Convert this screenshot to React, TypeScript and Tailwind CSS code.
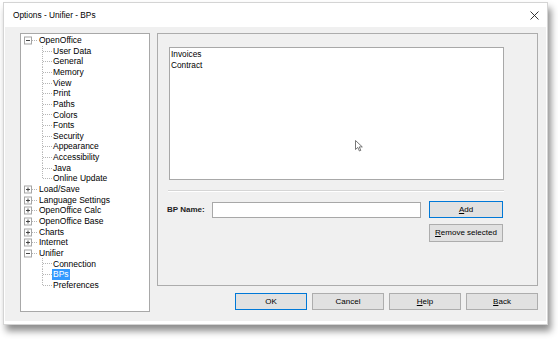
import React from "react";

type Node = { label: string; open?: boolean; children?: string[] };

const tree: Node[] = [
  {
    label: "OpenOffice",
    open: true,
    children: [
      "User Data",
      "General",
      "Memory",
      "View",
      "Print",
      "Paths",
      "Colors",
      "Fonts",
      "Security",
      "Appearance",
      "Accessibility",
      "Java",
      "Online Update",
    ],
  },
  { label: "Load/Save" },
  { label: "Language Settings" },
  { label: "OpenOffice Calc" },
  { label: "OpenOffice Base" },
  { label: "Charts" },
  { label: "Internet" },
  { label: "Unifier", open: true, children: ["Connection", "BPs", "Preferences"] },
];

const SELECTED = "BPs";
const ROW = 10.65;

function Expander({ open }: { open?: boolean }) {
  return (
    <svg width="18" height={ROW} viewBox={`0 0 18 ${ROW}`} className="shrink-0">
      <rect x="3.5" y="2" width="7" height="7" fill="#fff" stroke="#a5a5a5" />
      <line x1="5" y1="5.5" x2="9" y2="5.5" stroke="#444" />
      {!open && <line x1="7" y1="3.5" x2="7" y2="7.5" stroke="#444" />}
      <line x1="11" y1="5.5" x2="17" y2="5.5" stroke="#b4b4b4" strokeDasharray="1 1" />
    </svg>
  );
}

function Branch({ last }: { last: boolean }) {
  return (
    <svg width="32" height={ROW} viewBox={`0 0 32 ${ROW}`} className="shrink-0">
      <line x1="21.5" y1="0" x2="21.5" y2={last ? 5.5 : ROW} stroke="#b4b4b4" strokeDasharray="1 1" />
      <line x1="22" y1="5.5" x2="31" y2="5.5" stroke="#b4b4b4" strokeDasharray="1 1" />
    </svg>
  );
}

function Button({ label, u, def, w = "w-[72px]" }: { label: string; u?: number; def?: boolean; w?: string }) {
  const chars = label.split("");
  return (
    <button
      className={`${w} h-[17px] flex items-center justify-center bg-[#e1e1e1] text-[8px] text-black leading-none border ${
        def ? "border-[#0078d7]" : "border-[#adadad]"
      }`}
    >
      {chars.map((c, i) => (
        <span key={i} className={i === u ? "underline underline-offset-1" : ""}>
          {c === " " ? "\u00a0" : c}
        </span>
      ))}
    </button>
  );
}

export default function App() {
  return (
    <div
      className="w-[558px] h-[341px] bg-white pl-[3px] pt-[2px] overflow-hidden"
      style={{ fontFamily: '"Liberation Sans", Arial, sans-serif' }}
    >
      <div className="w-[545px] h-[323px] bg-white border border-[#d4d4d4] flex flex-col shadow-[3px_6px_7px_rgba(0,0,0,0.45)]">
        {/* title bar */}
        <div className="h-[24px] shrink-0 flex items-center justify-between pl-[9px] pr-[8px]">
          <span className="text-[8.3px] text-black">Options - Unifier - BPs</span>
          <svg width="9" height="9" viewBox="0 0 9 9">
            <path d="M0.5 0.5 L8.5 8.5 M8.5 0.5 L0.5 8.5" stroke="#222" strokeWidth="0.9" />
          </svg>
        </div>

        {/* body */}
        <div className="flex-1 mx-[1px] mb-[3px] bg-[#f0f0f0] flex pl-[15px] pr-[7px] pt-[6px]">
          {/* tree */}
          <div className="w-[130px] shrink-0 h-[279px] bg-white border border-[#a8a8a8] pt-[1px] text-[8.5px] text-black leading-none">
            {tree.map((n) => (
              <React.Fragment key={n.label}>
                <div className="flex items-center h-[10.65px]">
                  <Expander open={n.open} />
                  <span>{n.label}</span>
                </div>
                {n.open &&
                  n.children?.map((c, i) => (
                    <div key={c} className="flex items-center h-[10.65px]">
                      <Branch last={i === (n.children?.length ?? 0) - 1} />
                      {c === SELECTED ? (
                        <span className="-ml-[1px] px-[1px] py-[1px] bg-[#3399ff] text-white">{c}</span>
                      ) : (
                        <span>{c}</span>
                      )}
                    </div>
                  ))}
              </React.Fragment>
            ))}
          </div>

          {/* right side */}
          <div className="ml-[7px] w-[381px] shrink-0 flex flex-col">
            <div className="h-[253px] border border-[#acacac] flex flex-col pl-[11px] pt-[13px]">
              <div className="relative w-[335px] h-[133px] bg-white border border-[#a8a8a8] pt-[1px] pl-[1px] text-[8.3px] text-black leading-[10.6px]">
                <div>Invoices</div>
                <div>Contract</div>
                <svg
                  className="absolute left-[185px] top-[92px]"
                  width="8"
                  height="12"
                  viewBox="0 0 8 12"
                >
                  <path d="M0.5 0.5 L0.5 9.5 L2.8 7.4 L4.4 11 L5.8 10.4 L4.3 6.9 L7.3 6.9 Z" fill="#fff" stroke="#555" strokeWidth="0.8" />
                </svg>
              </div>
              <div className="mt-[10px] -ml-[1px] w-[336px] h-[2px] border-t border-[#d5d5d5] border-b border-b-white" />
              <div className="mt-[9px] -ml-[2px] grid grid-cols-[37px_209px_74px] gap-x-[8px] gap-y-[6px] items-center">
                <span className="text-[8px] font-bold text-[#222] whitespace-nowrap">BP Name:</span>
                <div className="h-[16px] bg-white border border-[#a8a8a8]" />
                <Button label="Add" u={0} def w="w-[74px]" />
                <span />
                <span />
                <div className="h-[18px] flex">
                  <Button label="Remove selected" u={0} w="w-[74px] h-[18px]" />
                </div>
              </div>
            </div>
            <div className="mt-[7px] flex justify-end gap-[5px]">
              <Button label="OK" def />
              <Button label="Cancel" />
              <Button label="Help" u={0} />
              <Button label="Back" u={0} />
            </div>
          </div>
        </div>
      </div>
    </div>
  );
}
